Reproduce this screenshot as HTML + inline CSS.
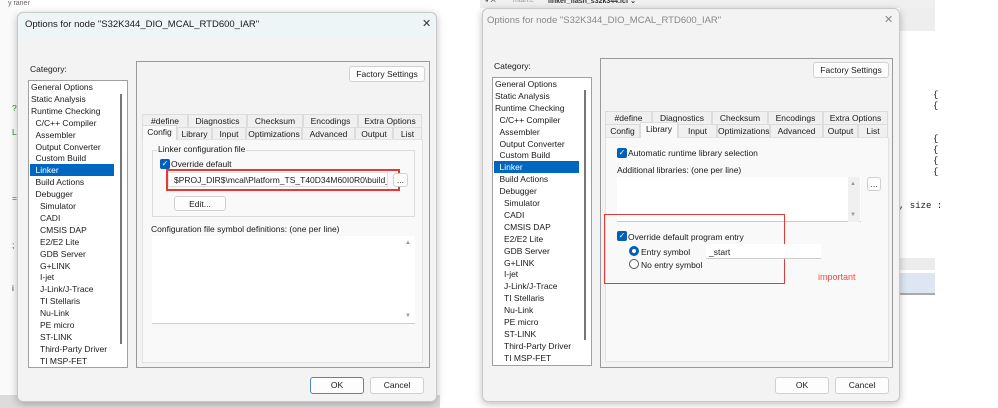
<!DOCTYPE html>
<html><head><style>
*{box-sizing:border-box;margin:0;padding:0}
body{width:998px;height:408px;position:relative;overflow:hidden;background:#fff;font-family:"Liberation Sans",sans-serif;font-size:8.5px;color:#1a1a1a}
.a{position:absolute}
.dlg{position:absolute;background:#f3f3f3;border:1px solid #c8c8c8;border-radius:6px;box-shadow:0 2px 8px rgba(0,0,0,.25)}
.list{position:absolute;background:#fff;border:1px solid #a0a0a0}
.list div{position:absolute;white-space:nowrap}
.panel{position:absolute;border:1px solid #999;background:#f3f3f3}
.btn{position:absolute;background:#fdfdfd;border:1px solid #d0d0d0;border-radius:3px;text-align:center;line-height:14px}
.tab{position:absolute;border:1px solid #dcdcdc;border-bottom:none;text-align:center;background:#f0f0f0;line-height:12px;white-space:nowrap}
.cb{position:absolute;width:10px;height:10px;background:#005fb8;border-radius:2px;color:#fff;font-size:8px;line-height:10px;text-align:center}
.rd{position:absolute;width:10px;height:10px;border-radius:50%;border:1px solid #555;background:#fff}
.t{position:absolute;white-space:nowrap}
</style></head><body>
<div class="a" style="left:0;top:395px;width:440px;height:13px;background:#dcdcdc"></div>
<div class="a" style="left:0;top:0;width:17px;height:395px;background:#fafafa"></div>
<div class="t" style="left:8px;top:0;color:#666;font-size:7px">y raner</div>
<div class="t" style="left:12px;top:103px;color:#2a8a2a">?</div>
<div class="t" style="left:12px;top:127px;color:#2a8a2a">L</div>
<div class="t" style="left:12px;top:193px;color:#2a8a2a">=</div>
<div class="t" style="left:12px;top:240px;color:#333">;</div>
<div class="t" style="left:12px;top:283px;color:#333">i</div>

<div class="dlg" style="left:17px;top:12px;width:420px;height:390px">
 <div class="a" style="left:0;top:0;width:418px;height:24px;background:#eef5f7;border-radius:6px 6px 0 0"></div>
 <div class="t" style="left:7px;top:6px;font-size:9.5px">Options for node "S32K344_DIO_MCAL_RTD600_IAR"</div>
 <div class="t" style="left:404px;top:4px;font-size:11px;color:#333">✕</div>
</div>
<div class="t" style="left:30px;top:64px">Category:</div>
<div class="list" style="left:28px;top:80px;width:100px;height:288px">
 <div style="left:1px;top:83px;width:84px;height:12px;background:#0067c0"></div>
 <div style="left:91px;top:13px;width:2px;height:250px;background:#777"></div>
</div>

<div class="panel" style="left:136px;top:61px;width:294px;height:307px"></div>
<div class="btn" style="left:349px;top:66px;width:76px;height:16px">Factory Settings</div>
<div class="tab" style="left:142px;top:114px;width:46px">#define</div>
<div class="tab" style="left:188px;top:114px;width:59px">Diagnostics</div>
<div class="tab" style="left:247px;top:114px;width:56px">Checksum</div>
<div class="tab" style="left:303px;top:114px;width:55px">Encodings</div>
<div class="tab" style="left:358px;top:114px;width:64px">Extra Options</div>
<div class="tab" style="left:142px;top:125px;width:35px;height:15px;background:#f9f9f9;z-index:2">Config</div>
<div class="tab" style="left:177px;top:127px;width:35px">Library</div>
<div class="tab" style="left:212px;top:127px;width:34px">Input</div>
<div class="tab" style="left:246px;top:127px;width:56px">Optimizations</div>
<div class="tab" style="left:302px;top:127px;width:53px">Advanced</div>
<div class="tab" style="left:355px;top:127px;width:38px">Output</div>
<div class="tab" style="left:393px;top:127px;width:29px">List</div>
<div class="a" style="left:142px;top:139px;width:281px;height:224px;background:#f9f9f9;border:1px solid #e2e2e2"></div>
<div class="a" style="left:152px;top:150px;width:263px;height:67px;border:1px solid #dcdcdc"></div>
<div class="t" style="left:157px;top:144px;background:#f9f9f9;padding:0 1px">Linker configuration file</div>
<div class="cb" style="left:160px;top:159px">✓</div>
<div class="t" style="left:171px;top:159px">Override default</div>
<div class="a" style="left:168px;top:172px;width:220px;height:15px;background:#fff;border:1px solid #ddd;overflow:hidden;white-space:nowrap;padding:2px 0 0 5px">$PROJ_DIR$\mcal\Platform_TS_T40D34M60I0R0\build_file</div>
<div class="a" style="left:166px;top:169px;width:234px;height:22px;border:2px solid #e53935"></div>
<div class="btn" style="left:393px;top:173px;width:15px;height:14px;line-height:12px">...</div>
<div class="btn" style="left:174px;top:196px;width:52px;height:15px">Edit...</div>
<div class="t" style="left:151px;top:224px">Configuration file symbol definitions: (one per line)</div>
<div class="a" style="left:152px;top:236px;width:263px;height:88px;background:#fff;border-bottom:1px solid #ccc"></div>
<div class="t" style="left:405px;top:240px;font-size:6px;color:#999">▲</div>
<div class="t" style="left:405px;top:313px;font-size:6px;color:#999">▼</div>
<div class="btn" style="left:310px;top:377px;width:54px;height:17px;border:1px solid #4a86c5">OK</div>
<div class="btn" style="left:370px;top:377px;width:54px;height:17px">Cancel</div>

<div class="a" style="left:480px;top:0;width:455px;height:8px;background:#f0f0f0"></div>
<div class="t" style="left:485px;top:-3px;font-size:7px;color:#333">⏸ ✕</div>
<div class="t" style="left:513px;top:-3px;font-size:7px;color:#999">main.c</div>
<div class="t" style="left:548px;top:-3px;font-size:7px;font-weight:bold;color:#333">linker_flash_s32k344.icf ⌄</div>
<div class="a" style="left:900px;top:8px;width:35px;height:23px;background:#eee"></div>
<div class="t" style="left:933px;top:90px;font-family:'Liberation Mono';font-size:9px;line-height:11px">{<br>{<br><br><br>{<br>{<br>{<br>{</div>
<div class="t" style="left:899px;top:201px;font-family:'Liberation Mono';font-size:9px">, size :</div>
<div class="a" style="left:900px;top:258px;width:35px;height:12px;background:#ececec"></div>
<div class="a" style="left:900px;top:273px;width:35px;height:22px;background:#dde6f2;border-bottom:2px solid #aaa"></div>

<div class="dlg" style="left:482px;top:8px;width:418px;height:394px;background:#f3f3f3"></div>
<div class="t" style="left:487px;top:15px;font-size:9.5px;color:#888">Options for node "S32K344_DIO_MCAL_RTD600_IAR"</div>
<div class="t" style="left:884px;top:13px;font-size:11px;color:#888">✕</div>
<div class="t" style="left:494px;top:61px">Category:</div>
<div class="list" style="left:492px;top:77px;width:100px;height:289px">
 <div style="left:1px;top:83px;width:85px;height:12px;background:#0067c0"></div>
 <div style="left:91px;top:12px;width:2px;height:250px;background:#777"></div>
</div>

<div class="panel" style="left:600px;top:58px;width:293px;height:310px"></div>
<div class="btn" style="left:813px;top:62px;width:76px;height:16px">Factory Settings</div>
<div class="tab" style="left:605px;top:111px;width:47px">#define</div>
<div class="tab" style="left:652px;top:111px;width:60px">Diagnostics</div>
<div class="tab" style="left:712px;top:111px;width:56px">Checksum</div>
<div class="tab" style="left:768px;top:111px;width:55px">Encodings</div>
<div class="tab" style="left:823px;top:111px;width:65px">Extra Options</div>
<div class="tab" style="left:605px;top:124px;width:35px">Config</div>
<div class="tab" style="left:640px;top:122px;width:38px;height:16px;background:#f9f9f9;z-index:2">Library</div>
<div class="tab" style="left:678px;top:124px;width:39px">Input</div>
<div class="tab" style="left:717px;top:124px;width:53px">Optimizations</div>
<div class="tab" style="left:770px;top:124px;width:53px">Advanced</div>
<div class="tab" style="left:823px;top:124px;width:35px">Output</div>
<div class="tab" style="left:858px;top:124px;width:30px">List</div>
<div class="a" style="left:605px;top:137px;width:284px;height:225px;background:#f9f9f9;border:1px solid #e2e2e2"></div>
<div class="cb" style="left:617px;top:148px">✓</div>
<div class="t" style="left:628px;top:148px">Automatic runtime library selection</div>
<div class="t" style="left:617px;top:165px">Additional libraries: (one per line)</div>
<div class="a" style="left:617px;top:177px;width:244px;height:45px;background:#fff;border-bottom:1px solid #ccc"></div>
<div class="a" style="left:848px;top:177px;width:12px;height:45px;background:#f0f0f0"></div>
<div class="t" style="left:850px;top:181px;font-size:6px;color:#999">▲</div>
<div class="t" style="left:850px;top:212px;font-size:6px;color:#999">▼</div>
<div class="btn" style="left:867px;top:177px;width:14px;height:14px;line-height:12px">...</div>
<div class="a" style="left:604px;top:214px;width:181px;height:70px;border:1.5px solid #e53935"></div>
<div class="cb" style="left:617px;top:231px">✓</div>
<div class="t" style="left:628px;top:232px">Override default program entry</div>
<div class="rd" style="left:629px;top:246px;border:3px solid #005fb8"></div>
<div class="t" style="left:641px;top:247px">Entry symbol</div>
<div class="a" style="left:706px;top:244px;width:115px;height:15px;background:#fff;border-bottom:1px solid #ccc"></div>
<div class="t" style="left:709px;top:247px">_start</div>
<div class="rd" style="left:629px;top:259px"></div>
<div class="t" style="left:641px;top:260px">No entry symbol</div>
<div class="t" style="left:818px;top:272px;color:#f44;font-size:9px">important</div>
<div class="btn" style="left:775px;top:377px;width:54px;height:17px">OK</div>
<div class="btn" style="left:835px;top:377px;width:54px;height:17px">Cancel</div>

<script>
var items=["General Options","Static Analysis","Runtime Checking"," C/C++ Compiler"," Assembler"," Output Converter"," Custom Build"," Linker"," Build Actions"," Debugger","  Simulator","  CADI","  CMSIS DAP","  E2/E2 Lite","  GDB Server","  G+LINK","  I-jet","  J-Link/J-Trace","  TI Stellaris","  Nu-Link","  PE micro","  ST-LINK","  Third-Party Driver","  TI MSP-FET"];
function fill(x,y){items.forEach(function(s,i){var d=document.createElement('div');d.className='t';var ind=s.match(/^ */)[0].length;d.textContent=s.trim();d.style.left=(x+ind*4.5)+'px';d.style.top=(y+i*11.9)+'px';if(s.trim()=='Linker')d.style.color='#fff';d.style.zIndex=3;document.body.appendChild(d);});}
fill(31,82);fill(495,79);
</script>
</body></html>
